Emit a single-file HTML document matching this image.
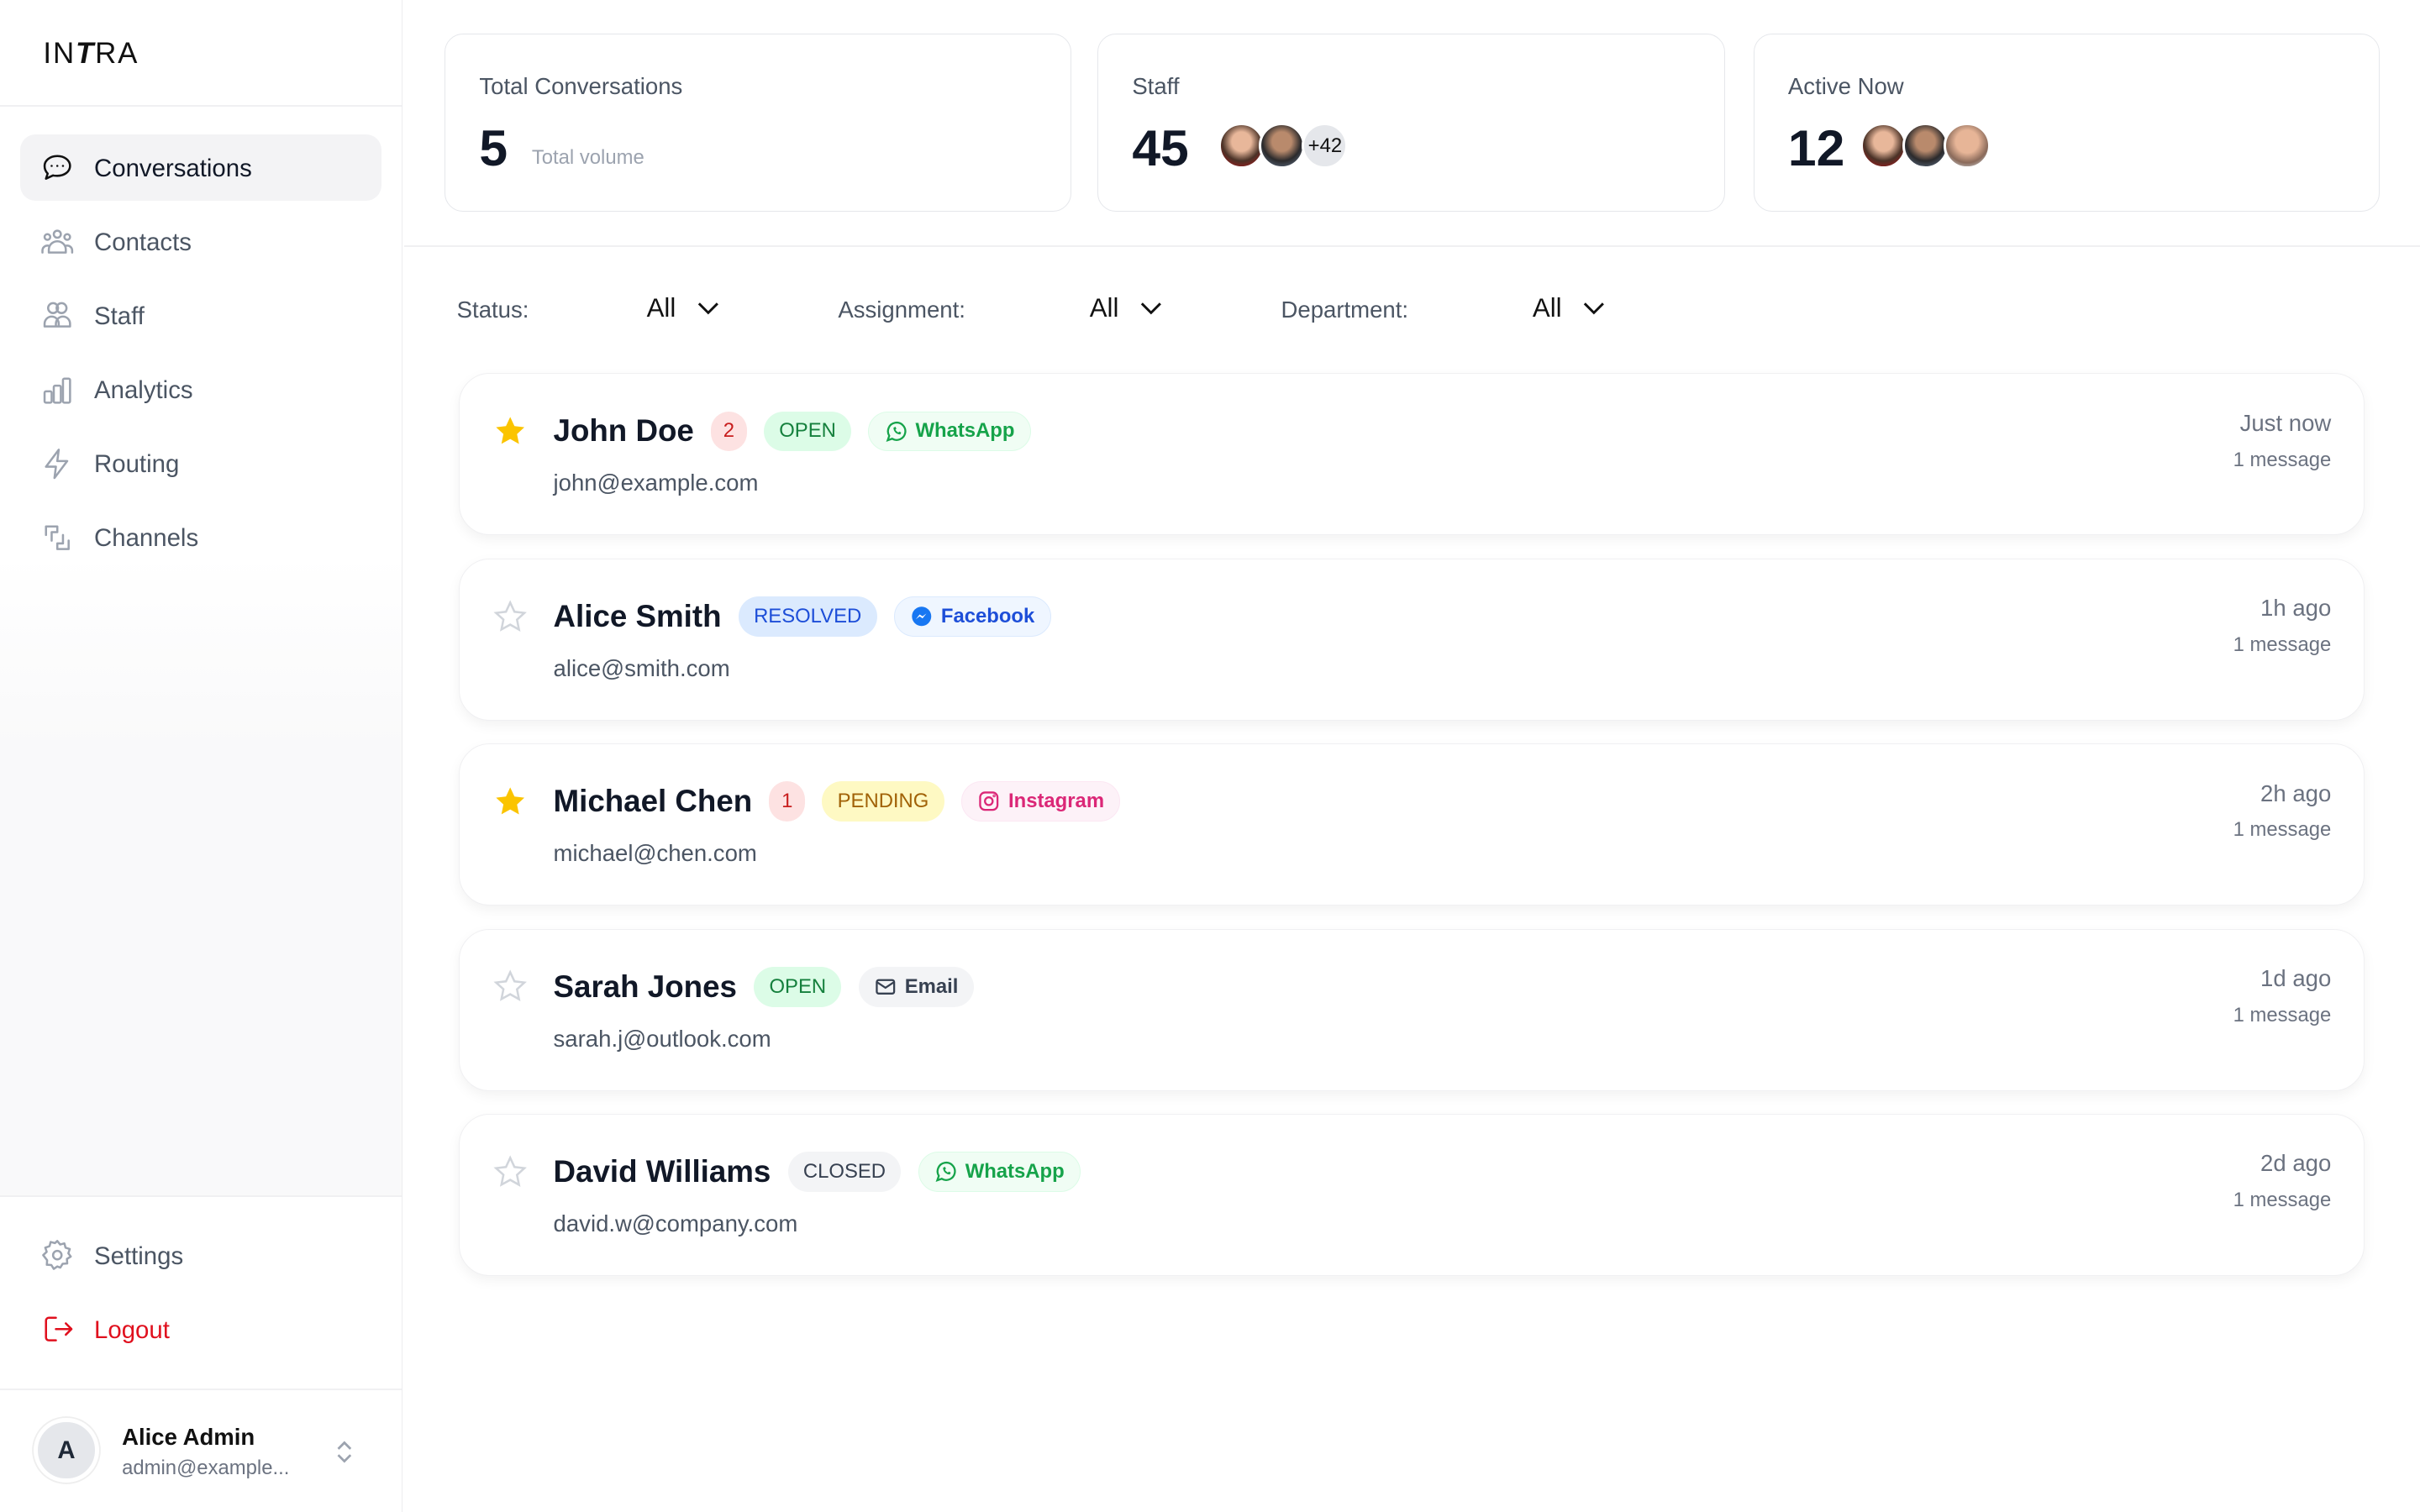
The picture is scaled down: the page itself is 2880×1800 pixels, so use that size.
<!DOCTYPE html>
<html><head><meta charset="utf-8"><style>
*{box-sizing:border-box;margin:0;padding:0}
html,body{width:2880px;height:1800px;overflow:hidden;background:#fff}
#r{zoom:1.836735;width:1568px;height:980px;position:relative;font-family:"Liberation Sans",sans-serif;color:#111827}
.sb{position:absolute;left:0;top:0;width:261px;height:980px;border-right:1px solid #ececef;background:#fff}
.logo{position:absolute;left:28px;top:24px;font-size:19px;letter-spacing:1px;color:#111}
.hr{position:absolute;height:1px;background:#f0f0f2}
.nav{position:absolute;left:13px;width:234px;height:43px;border-radius:10px;display:flex;align-items:center;font-size:16px;color:#4b5563}
.nav svg{position:absolute;left:13px;width:22px;height:22px;fill:none;stroke:#9ca3af;stroke-width:1.5;stroke-linecap:round;stroke-linejoin:round}
.nav span{position:absolute;left:48px;top:13px}
.card{position:absolute;top:22px;height:115px;border:1px solid #e5e7eb;border-radius:12px;background:#fff}
.card .t{position:absolute;left:22px;top:25px;font-size:15px;color:#4b5563}
.card .n{position:absolute;left:22px;top:54px;font-size:33px;font-weight:bold;color:#111827}
.av{position:absolute;top:57px;width:30px;height:30px;border-radius:50%;border:2px solid #fff}
.flt{position:absolute;top:192px;font-size:15px;color:#4b5563}
.sel{position:absolute;top:190px;font-size:17px;color:#111}
.chev{position:absolute;top:193px;width:14px;height:14px;fill:none;stroke:#111;stroke-width:1.6}
.row{position:absolute;left:297px;width:1235px;height:105px;border-radius:20px;background:#fff;border:1px solid #f0f0f2;box-shadow:0 3px 8px rgba(0,0,0,.05)}
.star{position:absolute;left:22px;top:26px;width:22px;height:22px}
.nm{position:absolute;left:61px;top:24px;font-size:20px;font-weight:bold;color:#111827;display:flex;align-items:center;white-space:nowrap}
.b{display:inline-flex;align-items:center;height:26px;border-radius:13px;padding:0 10px;font-size:13px;font-weight:normal;margin-left:11px}
.em{position:absolute;left:61px;top:62px;font-size:15px;color:#4b5563}
.tm{position:absolute;right:21px;top:23px;font-size:15px;color:#6b7280;text-align:right}
.ms{position:absolute;right:21px;top:48px;font-size:13px;color:#6b7280}
.b svg{width:15px;height:15px;margin-right:5px}
</style></head><body><div id="r">
<div class="sb">
<div class="logo">IN<b style="font-style:italic;font-weight:900">T</b>RA</div>
<div class="hr" style="left:0;top:68px;width:260px"></div>
<div style="position:absolute;left:0;top:360px;width:260px;height:415px;background:linear-gradient(180deg,#fff,#f9f9fa 30%,#f9f9fa)"></div>
<div class="nav" style="top:87px;background:#f3f3f5;color:#111827"><svg viewBox="0 0 24 24" style="stroke:#111"><path d="M12 4c5 0 9 3 9 7s-4 7-9 7c-1 0-2 0-3-.3L4 20l1.2-3.6C3.8 15 3 13.1 3 11c0-4 4-7 9-7z"/><path d="M8 11h.01M12 11h.01M16 11h.01"/></svg><span>Conversations</span></div>
<div class="nav" style="top:135px"><svg viewBox="0 0 24 24"><circle cx="12" cy="7" r="2.5"/><circle cx="5" cy="9" r="2"/><circle cx="19" cy="9" r="2"/><path d="M6 20v-2a6 6 0 0 1 12 0v2zM1.5 20v-1.5a3.5 3.5 0 0 1 4-3.4M22.5 20v-1.5a3.5 3.5 0 0 0-4-3.4"/></svg><span>Contacts</span></div>
<div class="nav" style="top:183px"><svg viewBox="0 0 24 24"><circle cx="9" cy="7" r="3.5"/><circle cx="15" cy="7" r="3.5"/><path d="M3 20v-2a5 5 0 0 1 10 0v2zM11 20v-2a5 5 0 0 1 10 0v2z"/></svg><span>Staff</span></div>
<div class="nav" style="top:231px"><svg viewBox="0 0 24 24"><rect x="3" y="13" width="5" height="8" rx="1"/><rect x="9.5" y="9" width="5" height="12" rx="1"/><rect x="16" y="4" width="5" height="17" rx="1"/></svg><span>Analytics</span></div>
<div class="nav" style="top:279px"><svg viewBox="0 0 24 24"><path d="M13 2L4 14h7l-1 8 9-12h-7z"/></svg><span>Routing</span></div>
<div class="nav" style="top:327px"><svg viewBox="0 0 24 24"><path d="M4 10V4h8v4H8v6M20 14v6h-8v-4h4V10"/></svg><span>Channels</span></div>
<div class="hr" style="left:0;top:775px;width:260px"></div>
<div class="nav" style="top:792px"><svg viewBox="0 0 24 24"><circle cx="12" cy="12" r="3"/><path d="M12 2l2 2.5 3-.8.8 3 3 1-1 3 1.7 2.3-2.7 1.7.2 3.2-3.2.2-1.7 2.7L12 20l-2.5 1.7-1.7-2.7-3.2-.2.2-3.2L2 12l2.5-2.3-1-3 3-1 .8-3 3 .8z"/></svg><span>Settings</span></div>
<div class="nav" style="top:840px;color:#e0101e"><svg viewBox="0 0 24 24" style="stroke:#e0101e"><path d="M11 4H6a2 2 0 0 0-2 2v12a2 2 0 0 0 2 2h5M11 12h11M18 8l4 4-4 4"/></svg><span>Logout</span></div>
<div class="hr" style="left:0;top:900px;width:260px"></div>
<div style="position:absolute;left:22px;top:919px;width:42px;height:42px;border-radius:50%;background:#e5e7eb;border:3px solid #fff;box-shadow:0 0 0 1px #eee;display:flex;align-items:center;justify-content:center;font-weight:bold;font-size:16px;color:#1f2937">A</div>
<div style="position:absolute;left:79px;top:923px;font-size:15px;font-weight:bold;color:#111">Alice Admin</div>
<div style="position:absolute;left:79px;top:944px;font-size:13px;color:#6b7280">admin@example...</div>
<svg style="position:absolute;left:216px;top:932px" width="14" height="18" viewBox="0 0 14 18" fill="none" stroke="#9ca3af" stroke-width="1.5"><path d="M3 7l4-4 4 4M3 11l4 4 4-4"/></svg>
</div>

<div class="card" style="left:288px;width:406px"><div class="t">Total Conversations</div><div class="n">5</div><div style="position:absolute;left:56px;top:72px;font-size:13px;color:#9ca3af">Total volume</div></div>
<div class="card" style="left:711px;width:407px"><div class="t">Staff</div><div class="n">45</div>
<div class="av" style="left:78px;background:radial-gradient(circle at 50% 40%,#e8b79a 30%,#4a3227 60%,#a0181b 90%)"></div>
<div class="av" style="left:104px;background:radial-gradient(circle at 50% 40%,#b98a6c 30%,#2b2a2c 60%,#5a6b80 90%)"></div>
<div class="av" style="left:132px;background:#e5e7eb;font-size:13px;display:flex;align-items:center;justify-content:center;color:#111">+42</div></div>
<div class="card" style="left:1136px;width:406px"><div class="t">Active Now</div><div class="n">12</div>
<div class="av" style="left:69px;background:radial-gradient(circle at 50% 40%,#e8b79a 30%,#4a3227 60%,#a0181b 90%)"></div>
<div class="av" style="left:96px;background:radial-gradient(circle at 50% 40%,#b98a6c 30%,#2b2a2c 60%,#5a6b80 90%)"></div>
<div class="av" style="left:123px;background:radial-gradient(circle at 50% 40%,#e7b597 35%,#8a6a5a 65%,#c9ccd0 90%)"></div></div>
<div class="hr" style="left:262px;top:159px;width:1306px"></div>

<div class="flt" style="left:296px">Status:</div><div class="sel" style="left:419px">All</div><svg class="chev" style="left:452px" viewBox="0 0 14 14"><path d="M1 4l6 6 6-6"/></svg>
<div class="flt" style="left:543px">Assignment:</div><div class="sel" style="left:706px">All</div><svg class="chev" style="left:739px" viewBox="0 0 14 14"><path d="M1 4l6 6 6-6"/></svg>
<div class="flt" style="left:830px">Department:</div><div class="sel" style="left:993px">All</div><svg class="chev" style="left:1026px" viewBox="0 0 14 14"><path d="M1 4l6 6 6-6"/></svg>

<div class="row" style="top:242px">
<svg class="star" viewBox="0 0 24 24"><path d="M12 2l3 6.5 7 .8-5.2 4.8 1.4 7L12 17.6 5.8 21l1.4-7L2 9.3l7-.8z" fill="#fbc400"/></svg>
<div class="nm">John Doe<span class="b" style="background:#fde2e2;color:#c81e1e;padding:0 8px">2</span><span class="b" style="background:#dcfce7;color:#15803d">OPEN</span><span class="b" style="background:#f0fdf4;color:#16a34a;border:1px solid #dcfce7;font-weight:bold"><svg viewBox="0 0 24 24" fill="none" stroke="#16a34a" stroke-width="2"><path d="M3 21l1.6-4.6A9 9 0 1 1 7.6 19.4z"/><path d="M9 8c0 4 3 7 7 7l1-2-2-1-1 1c-1-.5-2.5-2-3-3l1-1-1-2z" fill="#16a34a" stroke="none"/></svg>WhatsApp</span></div>
<div class="em">john@example.com</div><div class="tm">Just now</div><div class="ms">1 message</div></div>

<div class="row" style="top:362px">
<svg class="star" viewBox="0 0 24 24"><path d="M12 2l3 6.5 7 .8-5.2 4.8 1.4 7L12 17.6 5.8 21l1.4-7L2 9.3l7-.8z" fill="none" stroke="#d1d5db" stroke-width="1.5"/></svg>
<div class="nm">Alice Smith<span class="b" style="background:#dbeafe;color:#1d4ed8">RESOLVED</span><span class="b" style="background:#eff6ff;color:#1d4ed8;border:1px solid #dbeafe;font-weight:bold"><svg viewBox="0 0 24 24"><circle cx="12" cy="12" r="10" fill="#1877f2"/><path d="M6 15l4-5 3 2 4-3-4 5-3-2z" fill="#fff"/></svg>Facebook</span></div>
<div class="em">alice@smith.com</div><div class="tm">1h ago</div><div class="ms">1 message</div></div>

<div class="row" style="top:482px">
<svg class="star" viewBox="0 0 24 24"><path d="M12 2l3 6.5 7 .8-5.2 4.8 1.4 7L12 17.6 5.8 21l1.4-7L2 9.3l7-.8z" fill="#fbc400"/></svg>
<div class="nm">Michael Chen<span class="b" style="background:#fde2e2;color:#c81e1e;padding:0 8px">1</span><span class="b" style="background:#fef9c3;color:#a16207">PENDING</span><span class="b" style="background:#fdf2f8;color:#db2777;border:1px solid #fce7f3;font-weight:bold"><svg viewBox="0 0 24 24" fill="none" stroke="#db2777" stroke-width="2"><rect x="3" y="3" width="18" height="18" rx="5"/><circle cx="12" cy="12" r="4"/><circle cx="17.5" cy="6.5" r=".5"/></svg>Instagram</span></div>
<div class="em">michael@chen.com</div><div class="tm">2h ago</div><div class="ms">1 message</div></div>

<div class="row" style="top:602px">
<svg class="star" viewBox="0 0 24 24"><path d="M12 2l3 6.5 7 .8-5.2 4.8 1.4 7L12 17.6 5.8 21l1.4-7L2 9.3l7-.8z" fill="none" stroke="#d1d5db" stroke-width="1.5"/></svg>
<div class="nm">Sarah Jones<span class="b" style="background:#dcfce7;color:#15803d">OPEN</span><span class="b" style="background:#f3f4f6;color:#374151;font-weight:bold"><svg viewBox="0 0 24 24" fill="none" stroke="#374151" stroke-width="2"><rect x="3" y="5" width="18" height="14" rx="2"/><path d="M3 7l9 6 9-6"/></svg>Email</span></div>
<div class="em">sarah.j@outlook.com</div><div class="tm">1d ago</div><div class="ms">1 message</div></div>

<div class="row" style="top:722px">
<svg class="star" viewBox="0 0 24 24"><path d="M12 2l3 6.5 7 .8-5.2 4.8 1.4 7L12 17.6 5.8 21l1.4-7L2 9.3l7-.8z" fill="none" stroke="#d1d5db" stroke-width="1.5"/></svg>
<div class="nm">David Williams<span class="b" style="background:#f3f4f6;color:#374151">CLOSED</span><span class="b" style="background:#f0fdf4;color:#16a34a;border:1px solid #dcfce7;font-weight:bold"><svg viewBox="0 0 24 24" fill="none" stroke="#16a34a" stroke-width="2"><path d="M3 21l1.6-4.6A9 9 0 1 1 7.6 19.4z"/><path d="M9 8c0 4 3 7 7 7l1-2-2-1-1 1c-1-.5-2.5-2-3-3l1-1-1-2z" fill="#16a34a" stroke="none"/></svg>WhatsApp</span></div>
<div class="em">david.w@company.com</div><div class="tm">2d ago</div><div class="ms">1 message</div></div>
</div></body></html>
